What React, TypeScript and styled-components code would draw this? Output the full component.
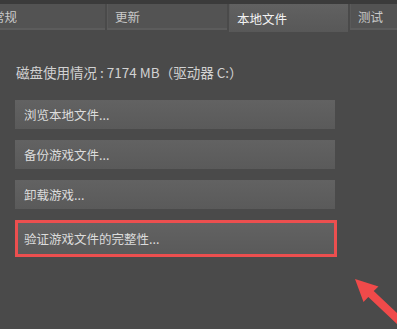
import { FunctionComponent } from 'react';
import styled, { createGlobalStyle } from 'styled-components';

const GlobalStyle = createGlobalStyle`
  html, body {
    margin: 0;
    padding: 0;
    background: #4a4a4a;
  }
  body {
    font-family: "Noto Sans CJK SC", "Liberation Sans", sans-serif;
  }
`;

const Window = styled.div`
  position: relative;
  width: 397px;
  height: 329px;
  overflow: hidden;
  background: #4a4a4a;
  border-top: 4px solid #3b3b3b;
  box-sizing: border-box;
`;

const TabBar = styled.div`
  display: flex;
  gap: 2px;
  margin-left: -16px;
  height: 28px;
  align-items: flex-start;
`;

const Tab = styled.div<{ $active?: boolean; $width: number }>`
  flex: none;
  width: ${(p) => p.$width}px;
  height: ${(p) => (p.$active ? 28 : 26)}px;
  box-sizing: border-box;
  padding: 0 8px;
  display: flex;
  align-items: center;
  font-size: 12.5px;
  color: ${(p) => (p.$active ? '#f2f2f2' : '#c9c9c9')};
  background: ${(p) => (p.$active ? 'linear-gradient(#616161, #585858)' : '#535353')};
  border-bottom: ${(p) => (p.$active ? 'none' : '2px solid #5c5c5c')};
  box-shadow: inset 1px 0 0 #5a5a5a;
`;

const Content = styled.div`
  display: flex;
  flex-direction: column;
  padding: 31px 0 0 15px;
`;

const DiskInfo = styled.div`
  font-size: 13.5px;
  line-height: 18px;
  color: #d2d2d2;
  margin: 0 0 19px 1px;
  white-space: nowrap;
`;

const ActionList = styled.div`
  display: flex;
  flex-direction: column;
  gap: 11px;
`;

const ActionButton = styled.div<{ $highlighted?: boolean }>`
  width: ${(p) => (p.$highlighted ? 316 : 320)}px;
  height: ${(p) => (p.$highlighted ? 31 : 29)}px;
  box-sizing: border-box;
  padding-left: ${(p) => (p.$highlighted ? 6 : 9)}px;
  display: flex;
  align-items: center;
  font-size: 12.5px;
  color: #dcdcdc;
  background: linear-gradient(#626262, #5a5a5a);
  margin: ${(p) => (p.$highlighted ? '3px 0 0 3px' : '0')};
  box-shadow: ${(p) => (p.$highlighted ? '0 0 0 3px #ec4f4f' : 'none')};
`;

const Arrow = styled.svg`
  position: absolute;
  left: 0;
  top: -4px;
  pointer-events: none;
`;

const tabs = [
  { label: '常规', width: 121 },
  { label: '更新', width: 120 },
  { label: '本地文件', width: 119, active: true },
  { label: '测试', width: 80 },
];

const actions = ['浏览本地文件...', '备份游戏文件...', '卸载游戏...'];

const App: FunctionComponent = () => (
  <Window>
    <GlobalStyle />
    <TabBar>
      {tabs.map((t) => (
        <Tab key={t.label} $active={t.active} $width={t.width}>
          {t.label}
        </Tab>
      ))}
    </TabBar>
    <Content>
      <DiskInfo>磁盘使用情况 : 7174 MB（驱动器 C:）</DiskInfo>
      <ActionList>
        {actions.map((a) => (
          <ActionButton key={a}>{a}</ActionButton>
        ))}
        <ActionButton $highlighted>验证游戏文件的完整性...</ActionButton>
      </ActionList>
    </Content>
    <Arrow width="397" height="329" viewBox="0 0 397 329">
      <polygon
        points="355,279 378.5,286.5 373.7,291.1 408.7,324.1 403.3,329.9 368.3,296.9 363.5,302"
        fill="#f04a4a"
      />
    </Arrow>
  </Window>
);

export default App;
